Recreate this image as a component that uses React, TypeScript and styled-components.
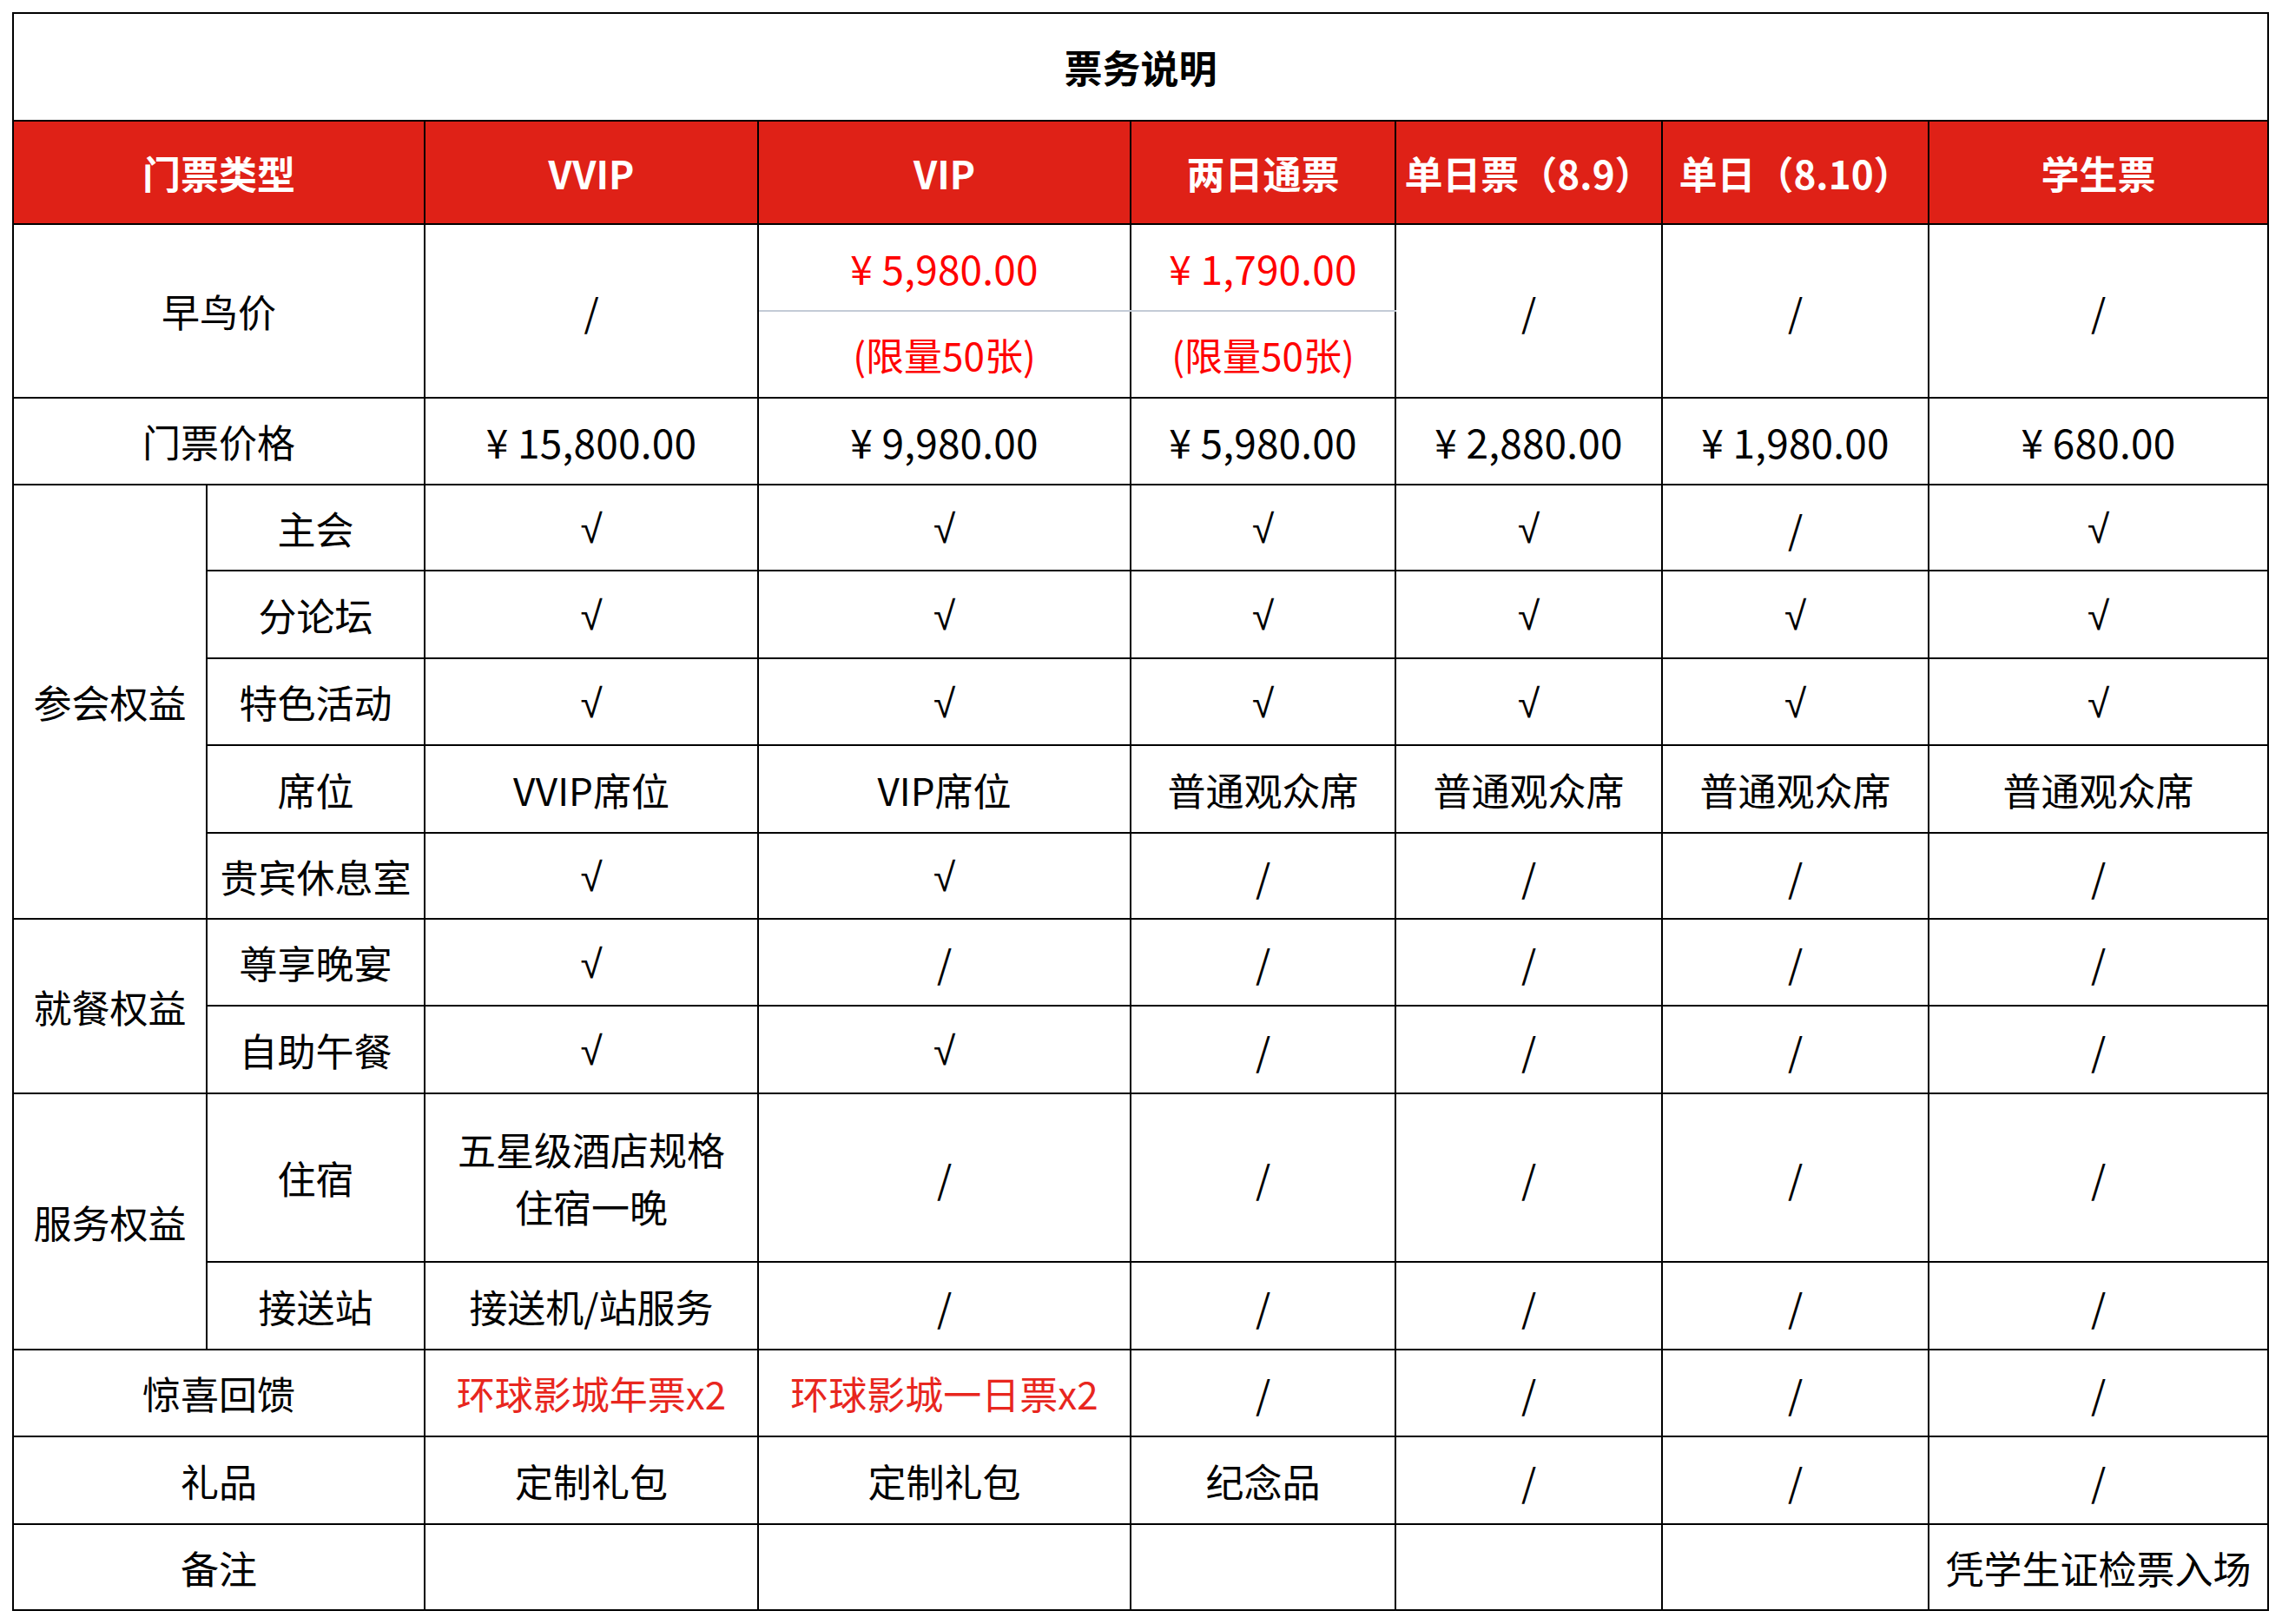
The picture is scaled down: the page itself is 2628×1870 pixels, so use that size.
import React from 'react';
import styled, { createGlobalStyle } from 'styled-components';

const Global = createGlobalStyle`
  html, body { margin: 0; padding: 0; background: #ffffff; }
  body { font-family: "Noto Sans CJK SC", "Microsoft YaHei", sans-serif; }
`;

const Page = styled.div`
  padding: 14px 0 14px 14px;
`;

const Table = styled.table`
  border-collapse: collapse;
  table-layout: fixed;
  width: 2599px;
  font-family: "Noto Sans CJK SC", "Microsoft YaHei", sans-serif;
  font-size: 44px;
  color: #000;
`;

const Row = styled.tr<{ $h: number }>`
  height: ${(p) => p.$h}px;
`;

const Cell = styled.td<{ $tone?: 'price' | 'gift'; $splitTop?: boolean; $splitBottom?: boolean }>`
  border: 2px solid #000;
  ${(p) => (p.$splitTop ? 'border-top: 2px solid #c3cbd6;' : '')}
  ${(p) => (p.$splitBottom ? 'border-bottom: 2px solid #c3cbd6;' : '')}
  padding: 0;
  text-align: center;
  vertical-align: middle;
  line-height: 66px;
  white-space: nowrap;
  color: ${(p) => (p.$tone === 'price' ? '#ff0000' : p.$tone === 'gift' ? '#e8261e' : '#000')};
`;

const Check = styled.span`
  font-family: "Liberation Sans", "DejaVu Sans", sans-serif;
  font-size: 46px;
`;

const Money = styled.span`
  font-size: 46px;
  letter-spacing: 0.2px;
`;

const TitleCell = styled.td`
  border: 2px solid #000;
  text-align: center;
  vertical-align: middle;
  font-weight: 700;
  font-size: 44px;
  padding: 0;
`;

const HeadCell = styled.th`
  border: 2px solid #000;
  background: #df2117;
  color: #ffffff;
  font-weight: 700;
  text-align: center;
  vertical-align: middle;
  padding: 0;
  white-space: nowrap;
`;

const colWidths = [223, 251, 384, 429, 305, 307, 307, 391];
const headers = ['VVIP', 'VIP', '两日通票', '单日票（8.9）', '单日（8.10）', '学生票'];

const C = <Check>√</Check>;
const money = (v: string) => <Money>¥ {v}</Money>;

type SubRow = { label: string; h: number; values: React.ReactNode[] };

const groups: { label: string; rows: SubRow[] }[] = [
  {
    label: '参会权益',
    rows: [
      { label: '主会', h: 99, values: [C, C, C, C, '/', C] },
      { label: '分论坛', h: 101, values: [C, C, C, C, C, C] },
      { label: '特色活动', h: 100, values: [C, C, C, C, C, C] },
      { label: '席位', h: 101, values: ['VVIP席位', 'VIP席位', '普通观众席', '普通观众席', '普通观众席', '普通观众席'] },
      { label: '贵宾休息室', h: 99, values: [C, C, '/', '/', '/', '/'] },
    ],
  },
  {
    label: '就餐权益',
    rows: [
      { label: '尊享晚宴', h: 100, values: [C, '/', '/', '/', '/', '/'] },
      { label: '自助午餐', h: 101, values: [C, C, '/', '/', '/', '/'] },
    ],
  },
  {
    label: '服务权益',
    rows: [
      {
        label: '住宿',
        h: 194,
        values: [
          <>
            五星级酒店规格
            <br />
            住宿一晚
          </>,
          '/',
          '/',
          '/',
          '/',
          '/',
        ],
      },
      { label: '接送站', h: 101, values: ['接送机/站服务', '/', '/', '/', '/', '/'] },
    ],
  },
];

const tailRows: { label: string; h: number; values: string[]; tone?: 'gift' }[] = [
  { label: '惊喜回馈', h: 100, values: ['环球影城年票x2', '环球影城一日票x2', '/', '/', '/', '/'], tone: 'gift' },
  { label: '礼品', h: 101, values: ['定制礼包', '定制礼包', '纪念品', '/', '/', '/'] },
  { label: '备注', h: 99, values: ['', '', '', '', '', '凭学生证检票入场'] },
];

const prices = ['15,800.00', '9,980.00', '5,980.00', '2,880.00', '1,980.00', '680.00'];

export default function App() {
  return (
    <>
      <Global />
      <Page>
        <Table>
          <colgroup>
            {colWidths.map((w, i) => (
              <col key={i} style={{ width: w }} />
            ))}
          </colgroup>
          <tbody>
            <Row $h={124}>
              <TitleCell colSpan={8}>票务说明</TitleCell>
            </Row>
            <Row $h={119}>
              <HeadCell colSpan={2}>门票类型</HeadCell>
              {headers.map((h) => (
                <HeadCell key={h}>{h}</HeadCell>
              ))}
            </Row>
            <Row $h={100}>
              <Cell colSpan={2} rowSpan={2}>早鸟价</Cell>
              <Cell rowSpan={2}>/</Cell>
              <Cell $tone="price" $splitBottom>{money('5,980.00')}</Cell>
              <Cell $tone="price" $splitBottom>{money('1,790.00')}</Cell>
              <Cell rowSpan={2}>/</Cell>
              <Cell rowSpan={2}>/</Cell>
              <Cell rowSpan={2}>/</Cell>
            </Row>
            <Row $h={100}>
              <Cell $tone="price" $splitTop>(限量50张)</Cell>
              <Cell $tone="price" $splitTop>(限量50张)</Cell>
            </Row>
            <Row $h={100}>
              <Cell colSpan={2}>门票价格</Cell>
              {prices.map((p, i) => (
                <Cell key={i}>{money(p)}</Cell>
              ))}
            </Row>
            {groups.map((g) =>
              g.rows.map((r, ri) => (
                <Row key={g.label + r.label} $h={r.h}>
                  {ri === 0 && <Cell rowSpan={g.rows.length}>{g.label}</Cell>}
                  <Cell>{r.label}</Cell>
                  {r.values.map((v, i) => (
                    <Cell key={i}>{v}</Cell>
                  ))}
                </Row>
              ))
            )}
            {tailRows.map((r) => (
              <Row key={r.label} $h={r.h}>
                <Cell colSpan={2}>{r.label}</Cell>
                {r.values.map((v, i) => (
                  <Cell key={i} $tone={r.tone && v !== '/' ? r.tone : undefined}>
                    {v}
                  </Cell>
                ))}
              </Row>
            ))}
          </tbody>
        </Table>
      </Page>
    </>
  );
}
